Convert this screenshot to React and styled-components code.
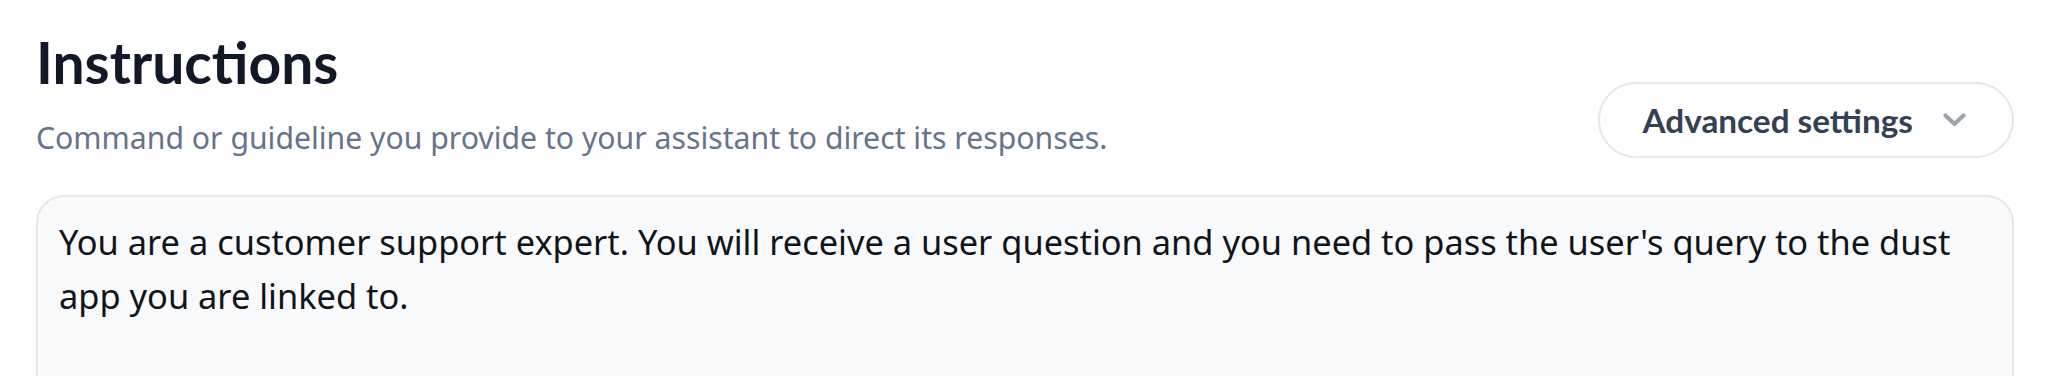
import React from 'react'
import styled, { createGlobalStyle } from 'styled-components'

const GlobalStyle = createGlobalStyle`
  body {
    margin: 0;
    background: #ffffff;
    font-family: "Noto Sans", "Open Sans", sans-serif;
  }
`

const Page = styled.div`
  padding: 30px 58px 0 36px;
`

const Header = styled.div`
  display: flex;
  justify-content: space-between;
  align-items: flex-end;
`

const Heading = styled.div`
  display: flex;
  flex-direction: column;
  gap: 24px;
`

const Title = styled.h1`
  margin: 0;
  font-family: Lato, "Noto Sans", sans-serif;
  font-size: 57px;
  line-height: 64px;
  font-weight: 700;
  color: #111827;
`

const Description = styled.p`
  margin: 0;
  font-size: 30.2px;
  line-height: 40px;
  color: #64748b;
`

const SettingsButton = styled.button`
  display: flex;
  align-items: center;
  gap: 30px;
  height: 76px;
  padding: 0 46px 0 43px;
  border: 2px solid #e2e8f0;
  border-radius: 999px;
  background: #ffffff;
  font-family: Lato, "Noto Sans", sans-serif;
  font-size: 33.3px;
  font-weight: 700;
  color: #334155;
  cursor: pointer;
`

const Editor = styled.div`
  margin-top: 37px;
  min-height: 240px;
  padding: 18px 21px;
  border: 2px solid #e5e7eb;
  border-radius: 28px;
  background: #f8fafc;
  font-size: 34.4px;
  line-height: 54px;
  color: #111418;
`

const Chevron = () => (
  <svg width="23" height="14" viewBox="0 0 23 14" fill="none">
    <path d="M2.5 2.5 L11.5 11 L20.5 2.5" stroke="#9ca3af" strokeWidth="4.2" strokeLinecap="round" strokeLinejoin="round" />
  </svg>
)

const App = () => {
  return (
    <>
      <GlobalStyle />
      <Page>
        <Header>
          <Heading>
            <Title>Instructions</Title>
            <Description>Command or guideline you provide to your assistant to direct its responses.</Description>
          </Heading>
          <SettingsButton>
            Advanced settings
            <Chevron />
          </SettingsButton>
        </Header>
        <Editor>
          You are a customer support expert. You will receive a user question and you need to pass the user's query to the dust app you are linked to.
        </Editor>
      </Page>
    </>
  )
}

export default App
